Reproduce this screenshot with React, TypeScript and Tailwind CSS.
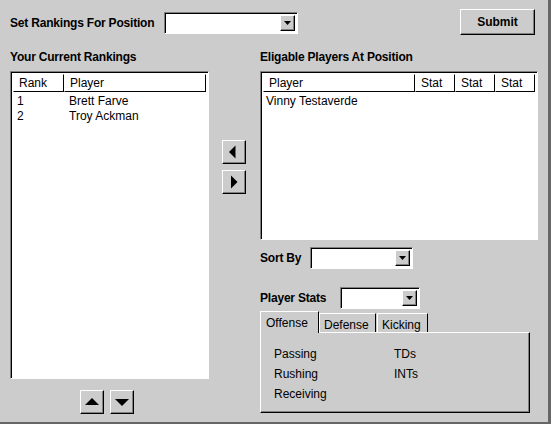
import React from "react";

const font = "font-['Liberation_Sans',Arial,Helvetica,sans-serif]";

// raised / sunken bevels, old java look
const raised =
  "border border-t-white border-l-white border-b-black border-r-black shadow-[inset_-1px_-1px_0_#808080]";
const sunken =
  "border border-t-[#808080] border-l-[#808080] border-b-white border-r-white shadow-[inset_1px_1px_0_#000]";

function ComboBox({ width }: { width: number }) {
  return (
    <div className={`${sunken} bg-white h-[22px] flex justify-end items-stretch p-[2px]`} style={{ width }}>
      <div className={`${raised} w-[15px] bg-[#cccccc] flex items-center justify-center`}>
        <svg width="7" height="4" viewBox="0 0 7 4" aria-hidden="true">
          <path d="M0 0h7L3.5 4z" fill="#000" />
        </svg>
      </div>
    </div>
  );
}

function ArrowButton({ dir }: { dir: "left" | "right" | "up" | "down" }) {
  const paths: Record<string, string> = {
    left: "M8.5 1.5v13L2 8z",
    right: "M3 1.5v13L9.5 8z",
    up: "M1 11h14L8 4z",
    down: "M1 5h14l-7 7z",
  };
  return (
    <div className={`${raised} w-[24px] h-[24px] bg-[#cccccc] flex items-center justify-center`}>
      <svg width="16" height="16" viewBox="0 0 16 16" aria-hidden="true" className={dir === "left" ? "ml-[2px]" : dir === "right" ? "ml-[3px]" : ""}>
        <path d={paths[dir]} fill="#000" />
      </svg>
    </div>
  );
}

function HeaderCell({ label, width, grow }: { label: string; width?: number; grow?: boolean }) {
  return (
    <div
      className={`h-[18px] border border-t-white border-l-white border-b-black border-r-black pl-[5px] flex items-center text-[12px] text-black ${grow ? "flex-1" : ""}`}
      style={width ? { width } : undefined}
    >
      {label}
    </div>
  );
}

export default function App() {
  return (
    <div className={`${font} w-[551px] h-[424px] bg-[#cccccc] border-r-[3px] border-b-[2px] border-[#666666] text-[12px] text-black overflow-hidden`}>
      <div className="flex items-center pl-[10px] pr-[13px] pt-[9px] h-[35px]">
        <span className="font-bold text-[12px] tracking-[-0.2px] mt-[2px]">Set Rankings For Position</span>
        <div className="ml-[10px] mt-[2px]">
          <ComboBox width={134} />
        </div>
        <button className={`${raised} ml-auto w-[75px] h-[26px] bg-[#cccccc] font-bold text-[12px]`}>Submit</button>
      </div>

      <div className="flex pl-[10px] pt-[15px]">
        {/* left column */}
        <div className="w-[199px] flex flex-col">
          <div className="font-bold tracking-[-0.2px] h-[14px] leading-[14px]">Your Current Rankings</div>
          <div className={`${sunken} mt-[7px] h-[308px] bg-white p-[2px]`}>
            <div className="flex">
              <HeaderCell label="Rank" width={51} />
              <HeaderCell label="Player" grow />
            </div>
            <div className="flex h-[16px] items-center pt-[2px]">
              <span className="w-[56px] pl-[4px]">1</span>
              <span>Brett Farve</span>
            </div>
            <div className="flex h-[16px] items-center">
              <span className="w-[56px] pl-[4px]">2</span>
              <span>Troy Ackman</span>
            </div>
          </div>
          <div className="flex gap-[6px] mt-[11px] pl-[70px]">
            <ArrowButton dir="up" />
            <ArrowButton dir="down" />
          </div>
        </div>

        {/* middle arrows */}
        <div className="w-[51px] flex flex-col items-center pt-[90px] gap-[6px] pr-[1px]">
          <ArrowButton dir="left" />
          <ArrowButton dir="right" />
        </div>

        {/* right column */}
        <div className="w-[278px] flex flex-col">
          <div className="font-bold tracking-[-0.2px] h-[14px] leading-[14px]">Eligable Players At Position</div>
          <div className={`${sunken} mt-[7px] h-[169px] bg-white p-[2px]`}>
            <div className="flex">
              <HeaderCell label="Player" grow />
              <HeaderCell label="Stat" width={40} />
              <HeaderCell label="Stat" width={40} />
              <HeaderCell label="Stat" width={40} />
            </div>
            <div className="h-[16px] flex items-center pl-[3px] pt-[2px]">Vinny Testaverde</div>
          </div>

          <div className="flex items-center mt-[7px]">
            <span className="font-bold tracking-[-0.2px] w-[50px]">Sort By</span>
            <ComboBox width={103} />
          </div>

          <div className="flex items-center mt-[18px]">
            <span className="font-bold tracking-[-0.2px] w-[80px]">Player Stats</span>
            <ComboBox width={80} />
          </div>

          <div className="flex items-end mt-[1px] h-[22px]">
            <div className="h-[22px] w-[59px] border border-b-0 border-t-white border-l-white border-r-black pl-[5px] pt-[2px] bg-[#cccccc] relative z-10 mb-[-1px]">
              Offense
            </div>
            <div className="h-[19px] w-[57px] border border-b-0 border-t-white border-l-white border-r-black pl-[4px] pt-[2px]">
              Defense
            </div>
            <div className="h-[19px] w-[51px] ml-[1px] border border-b-0 border-t-white border-l-white border-r-black pl-[4px] pt-[2px]">
              Kicking
            </div>
          </div>
          <div className="w-[270px] h-[81px] border border-t-white border-l-white border-b-black border-r-black shadow-[inset_-1px_-1px_0_#808080] flex pl-[13px] pt-[13px]">
            <div className="w-[120px] flex flex-col gap-[4px] leading-[16px]">
              <span>Passing</span>
              <span>Rushing</span>
              <span>Receiving</span>
            </div>
            <div className="flex flex-col gap-[4px] leading-[16px]">
              <span>TDs</span>
              <span>INTs</span>
            </div>
          </div>
        </div>
      </div>
    </div>
  );
}
